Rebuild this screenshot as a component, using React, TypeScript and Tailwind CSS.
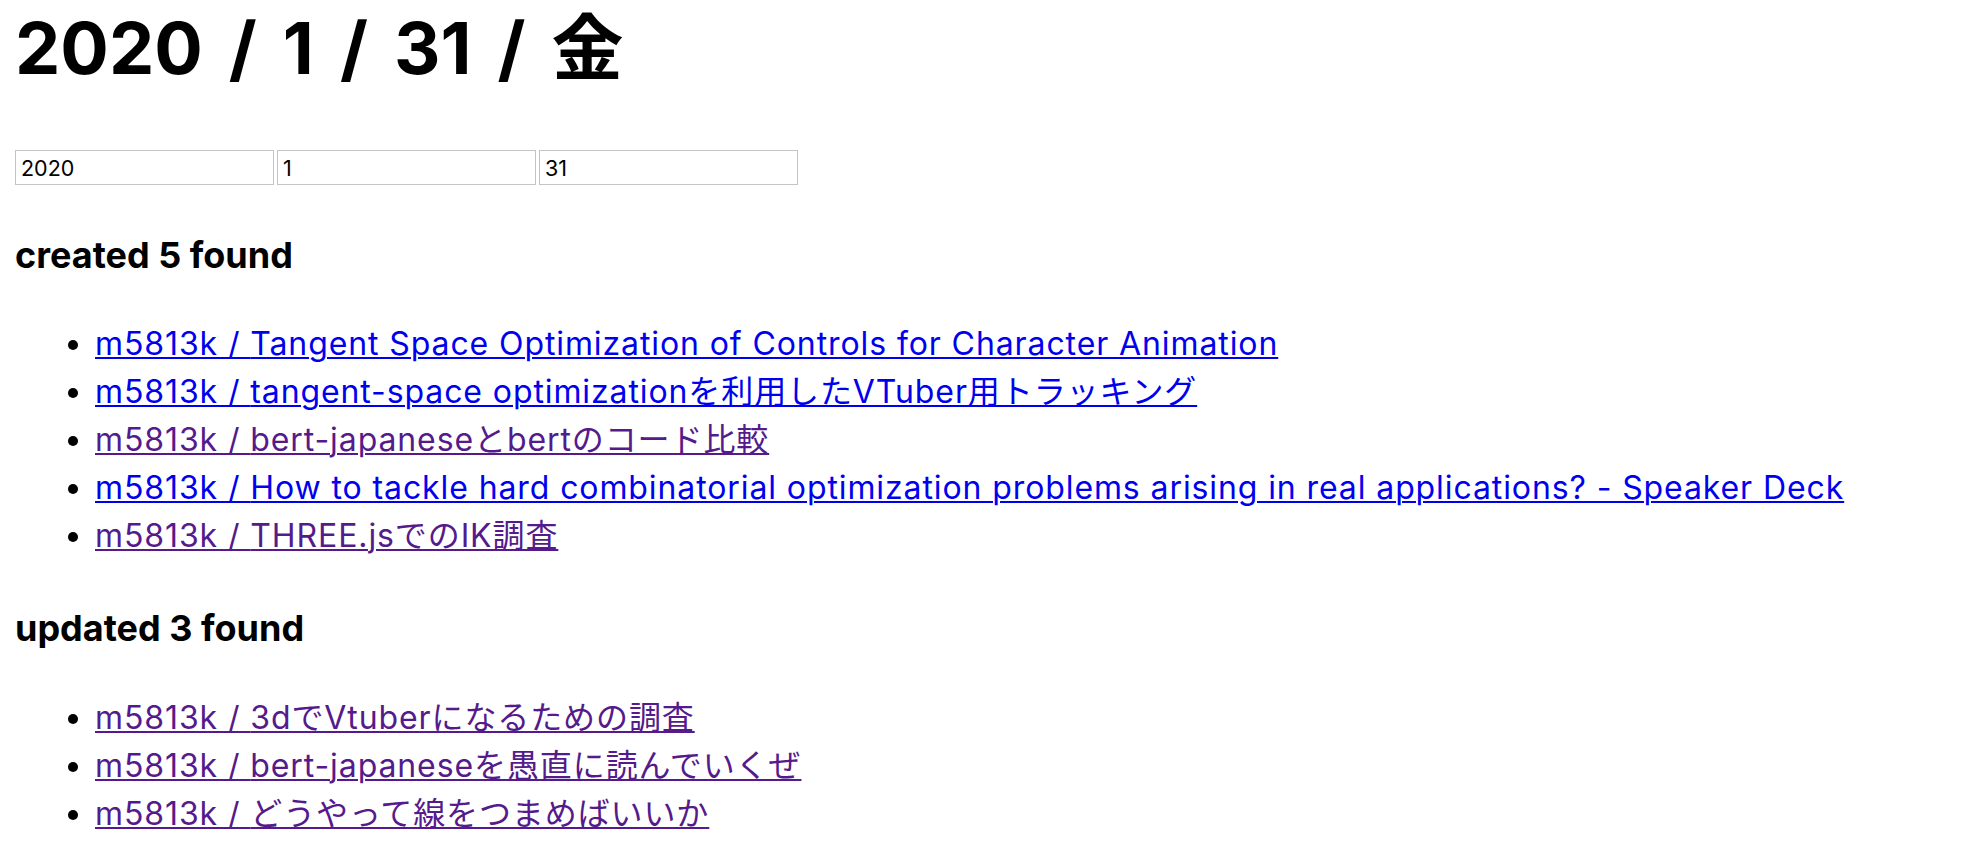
const created = [
  { title: 'Tangent Space Optimization of Controls for Character Animation', visited: false },
  { title: 'tangent-space optimizationを利用したVTuber用トラッキング', visited: false },
  { title: 'bert-japaneseとbertのコード比較', visited: true },
  {
    title:
      'How to tackle hard combinatorial optimization problems arising in real applications? - Speaker Deck',
    visited: false,
  },
  { title: 'THREE.jsでのIK調査', visited: true },
];

const updated = [
  { title: '3dでVtuberになるための調査', visited: true },
  { title: 'bert-japaneseを愚直に読んでいくぜ', visited: true },
  { title: 'どうやって線をつまめばいいか', visited: true },
];

type Item = { title: string; visited: boolean };

const PostList = ({ items }: { items: Item[] }) => {
  return (
    <ul className="list-disc pl-[80px] text-[32px] leading-[48px]">
      {items.map((item) => (
        <li key={item.title}>
          <a
            href="#"
            className={
              item.visited
                ? 'tracking-[0.9px] text-[#551a8b] underline decoration-2 underline-offset-[2px]'
                : 'tracking-[0.9px] text-[#0000ee] underline decoration-2 underline-offset-[2px]'
            }
          >
            m5813k / {item.title}
          </a>
        </li>
      ))}
    </ul>
  );
};

const DateInput = ({ value }: { value: string }) => (
  <input
    defaultValue={value}
    className="h-[35px] w-[259px] border border-[#c4c4c4] px-[5px] text-[21.5px] outline-none"
  />
);

export default function App() {
  return (
    <div className="min-h-screen bg-white pl-[15px] font-['Inter','Noto_Sans_CJK_JP',sans-serif] text-black">
      <h1 className="pt-[12px] text-[72px] leading-[72px] font-bold [word-spacing:9px]">
        2020 / 1 / 31 / 金
      </h1>

      <div className="mt-[66px] flex gap-[3px]">
        <DateInput value="2020" />
        <DateInput value="1" />
        <DateInput value="31" />
      </div>

      <h3 className="mt-[45px] text-[36px] leading-[50px] font-bold">created 5 found</h3>
      <div className="mt-[40px]">
        <PostList items={created} />
      </div>

      <h3 className="mt-[43px] text-[36px] leading-[50px] font-bold">updated 3 found</h3>
      <div className="mt-[41px]">
        <PostList items={updated} />
      </div>
    </div>
  );
}
